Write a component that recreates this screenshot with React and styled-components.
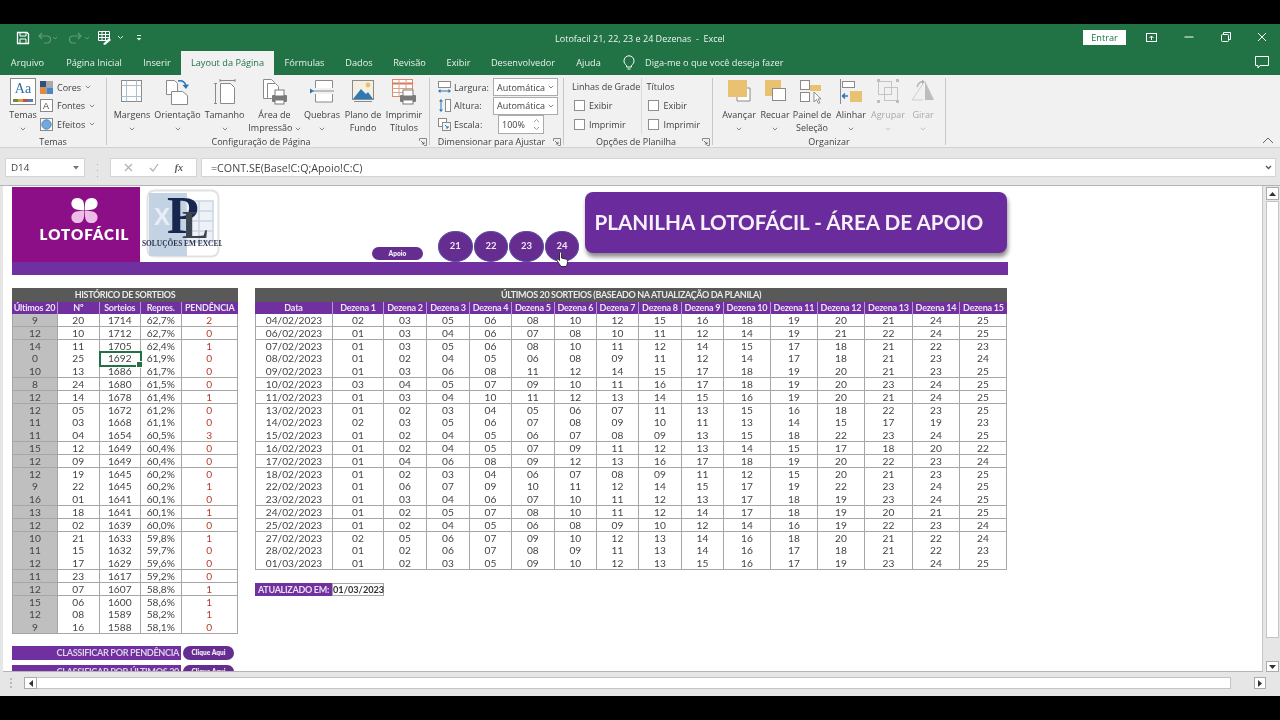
import React from "react";
import styled, { createGlobalStyle } from "styled-components";

const GlobalStyle = createGlobalStyle`
  html, body { margin: 0; padding: 0; background: #000; overflow: hidden; }
  * { box-sizing: border-box; }
`;

const uiFont = `"Open Sans", "Noto Sans", "Liberation Sans", sans-serif`;
const cellFont = `Lato, "Liberation Sans", sans-serif`;
const purple = "#7030a0";

const Screen = styled.div`
  width: 1280px;
  height: 720px;
  padding: 24px 0;
  background: #000;
  display: flex;
  flex-direction: column;
  font-family: ${uiFont};
  filter: blur(0.35px);
`;

/* title bar + tabs */
const TitleBar = styled.div`
  height: 26px;
  background: #217346;
  color: #eef4f0;
  display: grid;
  grid-template-columns: 1fr auto 1fr;
  align-items: center;
`;
const Qat = styled.div`
  display: flex;
  align-items: center;
  gap: 6px;
  padding-left: 15px;
  padding-top: 1px;
`;
const DocTitle = styled.div`
  font-size: 9px;
  padding-top: 3px;
  white-space: pre;
`;
const WindowControls = styled.div`
  display: flex;
  align-items: center;
  justify-content: flex-end;
`;
const SignIn = styled.div`
  width: 43px;
  height: 15px;
  background: #fff;
  color: #217346;
  font-size: 9.2px;
  line-height: 15px;
  text-align: center;
  margin-right: 7px;
`;
const WindowButton = styled.div`
  width: ${p => p.$w || 37}px;
  display: flex;
  justify-content: center;
`;
const TabBar = styled.div`
  height: 25px;
  background: #217346;
  display: flex;
  align-items: flex-end;
  color: #e8f1ec;
  font-size: 9.2px;
`;
const Tab = styled.div`
  width: ${p => p.$w}px;
  height: ${p => (p.$active ? 24 : 25)}px;
  line-height: ${p => (p.$active ? 24 : 25)}px;
  text-align: center;
  white-space: nowrap;
  background: ${p => (p.$active ? "#f1f1f1" : "transparent")};
  color: ${p => (p.$active ? "#217346" : "inherit")};
`;
const TellMe = styled.div`
  display: flex;
  align-items: center;
  height: 25px;
  gap: 10px;
  padding-left: 11px;
  flex: 1;
`;
const CommentBox = styled.div`
  margin-left: auto;
  padding-right: 11px;
  display: flex;
`;

/* ribbon */
const Ribbon = styled.div`
  height: 73px;
  background: #f1f1f1;
  border-bottom: 1px solid #d2d2d2;
  display: flex;
  padding: 3px 0 2px;
  color: #3f3f3f;
  font-size: 9px;
  position: relative;
`;
const Group = styled.div`
  width: ${p => p.$w}px;
  border-right: 1px solid #c8c8c8;
  display: flex;
  flex-direction: column;
  position: relative;
`;
const GroupBody = styled.div`
  height: 57px;
  display: flex;
  padding-left: ${p => p.$pad || 0}px;
`;
const GroupLabel = styled.div`
  height: 11px;
  line-height: 16px;
  text-align: center;
  white-space: nowrap;
  padding-right: ${p => p.$shift || 0}px;
`;
const Launcher = styled.svg`
  position: absolute;
  right: 2px;
  bottom: -1px;
`;
const BigButton = styled.div`
  width: ${p => p.$w}px;
  display: flex;
  flex-direction: column;
  align-items: center;
  color: ${p => (p.$off ? "#a9a9a9" : "inherit")};
`;
const BigIcon = styled.div`
  height: 30px;
  display: flex;
  align-items: flex-start;
  justify-content: center;
`;
const BigLabel = styled.div`
  line-height: 13px;
  text-align: center;
  white-space: nowrap;
`;
const ThemeTile = styled.div`
  width: 26px;
  height: 27px;
  border: 1px solid #8a8a8a;
  background: #fff;
  color: #2e6ea6;
  font: 14px/20px "Liberation Serif", serif;
  text-align: center;
  position: relative;
  &::after {
    content: "";
    position: absolute;
    left: 2px;
    right: 2px;
    bottom: 2px;
    height: 3px;
    background: linear-gradient(90deg, #6b8e3e 25%, #d8a13a 25% 50%, #c0504d 50% 75%, #4f81bd 75%);
  }
`;
const SmallStack = styled.div`
  display: flex;
  flex-direction: column;
`;
const SmallRow = styled.div`
  height: 18.5px;
  display: flex;
  align-items: center;
  gap: ${p => p.$gap || 3}px;
  white-space: nowrap;
`;
const FieldLabel = styled.span`
  width: ${p => p.$w}px;
  flex: none;
`;
const DropField = styled.div`
  width: 65px;
  height: 18px;
  margin-top: -1px;
  margin-bottom: -1px;
  background: #fff;
  border: 1px solid #ababab;
  padding: 0 3px;
  line-height: 15px;
  display: flex;
  align-items: center;
  justify-content: space-between;
`;
const SpinField = styled.div`
  width: 46px;
  height: 19px;
  margin-left: 5px;
  background: #fff;
  border: 1px solid #ababab;
  padding: 0 3px;
  display: flex;
  align-items: center;
  justify-content: space-between;
`;
const OptionColumn = styled.div`
  width: ${p => p.$w}px;
  display: flex;
  flex-direction: column;
  padding-left: ${p => p.$pad}px;
  border-right: ${p => (p.$divided ? "1px solid #dadada" : "none")};
  height: 55.5px;
`;
const OptionTitle = styled.div`
  height: 18.5px;
  line-height: 18.5px;
  white-space: nowrap;
`;
const CheckRow = styled.div`
  height: 18.5px;
  display: flex;
  align-items: center;
  gap: 4px;
  padding-left: 2px;
`;
const CheckBox = styled.span`
  width: 11px;
  height: 11px;
  background: #fff;
  border: 1px solid #8e8e8e;
  flex: none;
`;
const Collapse = styled.svg`
  position: absolute;
  right: 6px;
  bottom: 3px;
`;

/* formula bar */
const FormulaBar = styled.div`
  height: 38px;
  background: #e6e6e6;
  display: flex;
  padding: 10px 4px 8px 5px;
  border-bottom: 1px solid #b4b4b4;
  color: #444;
`;
const NameBox = styled.div`
  width: 80px;
  background: #fff;
  border: 1px solid #d4d4d4;
  font-size: 9.8px;
  display: flex;
  align-items: center;
  justify-content: space-between;
  padding: 0 5px;
`;
const Grip = styled.div`
  width: 25px;
  text-align: center;
  color: #aaa;
  font-size: 9px;
  line-height: 6px;
  padding-top: 4px;
  white-space: pre;
`;
const FormulaTools = styled.div`
  width: 87px;
  background: #fff;
  border: 1px solid #d4d4d4;
  margin-right: 4px;
  display: flex;
  align-items: center;
  justify-content: space-around;
  padding: 0 5px;
  color: #b0b0b0;
`;
const FxMark = styled.span`
  font: italic bold 10px "Liberation Serif", serif;
  color: #5c5c5c;
`;
const FormulaInput = styled.div`
  flex: 1;
  background: #fff;
  border: 1px solid #d4d4d4;
  font-size: 10.7px;
  display: flex;
  align-items: center;
  justify-content: space-between;
  padding: 0 3px 0 9px;
`;

/* worksheet */
const Middle = styled.div`
  height: 486px;
  display: flex;
  background: #e6e6e6;
`;
const Sheet = styled.div`
  flex: 1;
  margin-left: 3px;
  background: #fff;
  overflow: hidden;
  padding: 1px 0 0 9px;
  border-bottom: 1px solid #b4b4b4;
  border-right: 1px solid #c6c6c6;
`;
const Banner = styled.div`
  height: 75px;
  display: flex;
  width: 996px;
`;
const LogoBlock = styled.div`
  width: 128px;
  background: #8c0f87;
  display: flex;
  flex-direction: column;
  align-items: center;
  color: #fff;
  padding: 10px 0 0 17px;
  font: 800 15px/20px Lato, sans-serif;
  letter-spacing: 1px;
`;
const BrandMark = styled.div`
  width: 80px;
  margin-left: 2px;
  margin-top: 2px;
`;
const SmallPill = styled.div`
  width: 51px;
  height: 13px;
  margin: 60px 0 0 150px;
  border-radius: 7px;
  background: #662d91;
  color: #f0e8f5;
  font: 800 6.6px/13px Lato, sans-serif;
  text-align: center;
`;
const Circles = styled.div`
  display: flex;
  gap: 1px;
  margin: 44px 0 0 15px;
`;
const Circle = styled.div`
  width: 34.6px;
  height: 30.5px;
  border-radius: 50%;
  background: #662d91;
  border: 1px solid #5a4fa0;
  color: #f0e8f5;
  font: 700 9.5px/28px Lato, sans-serif;
  text-align: center;
  position: relative;
`;
const Cursor = styled.svg`
  position: absolute;
  left: 10px;
  top: 19px;
  z-index: 2;
`;
const TitleCard = styled.div`
  width: 422px;
  height: 61px;
  margin: 5px 0 0 6px;
  border-radius: 8px;
  background: #6a2c9c;
  box-shadow: 1px 4px 4px rgba(0, 0, 0, 0.45);
  color: #f6f0fa;
  font: 700 20.7px/61px Lato, sans-serif;
  padding-left: 9px;
  white-space: nowrap;
`;
const Band = styled.div`
  width: 996px;
  height: 13px;
  background: ${purple};
`;
const Boards = styled.div`
  display: flex;
  gap: 17px;
  margin-top: 13px;
  width: 996px;
  font-family: ${cellFont};
`;
const LeftColumn = styled.div`
  width: 226px;
  flex: none;
`;
const RightColumn = styled.div`
  width: 752px;
  flex: none;
`;
const BoardTitle = styled.div`
  height: 13.5px;
  background: #595959;
  color: #e9e9e9;
  font-weight: 700;
  font-size: 9px;
  letter-spacing: -0.36px;
  line-height: 14px;
  text-align: center;
  white-space: nowrap;
`;
const Row = styled.div`
  display: grid;
  grid-template-columns: ${p => p.$cols};
  height: ${p => (p.$head ? 12.5 : 12.8)}px;
`;
const HeadCell = styled.div`
  background: ${purple};
  color: #ebe3f2;
  font-weight: 700;
  font-size: 9px;
  letter-spacing: -0.22px;
  line-height: 12.5px;
  text-align: center;
  border-right: 1px solid #b79ad0;
  white-space: nowrap;
  overflow: hidden;
  &:last-child { border-right: none; }
`;
const Cell = styled.div`
  background: ${p => (p.$gray ? "#bfbfbf" : "#fff")};
  color: ${p => (p.$red ? "#c0392b" : "#444")};
  font-size: 10.2px;
  line-height: 12.2px;
  text-align: center;
  border-right: 1px solid #a6a6a6;
  border-bottom: 1px solid #a6a6a6;
  &:first-child { border-left: 1px solid #a6a6a6; }
  position: relative;
  ${p => p.$selected && `
    outline: 2px solid #217346;
    outline-offset: -1px;
    z-index: 1;
    &::after {
      content: "";
      position: absolute;
      right: -3px;
      bottom: -3px;
      width: 5px;
      height: 5px;
      background: #217346;
      border: 1px solid #fff;
    }
  `}
`;
const UpdateLine = styled.div`
  display: flex;
  margin-top: 13px;
  height: 13px;
`;
const UpdateLabel = styled.div`
  width: 77px;
  background: ${purple};
  color: #e8dff0;
  font-weight: 700;
  font-size: 9px;
  letter-spacing: -0.3px;
  line-height: 13px;
  text-align: center;
  white-space: nowrap;
`;
const UpdateValue = styled.div`
  width: 52px;
  border: 1px solid #a6a6a6;
  color: #333;
  font-weight: 700;
  font-size: 9.2px;
  line-height: 11.5px;
  text-align: center;
`;
const SortRow = styled.div`
  display: flex;
  gap: 2px;
  height: 13.5px;
  margin-top: ${p => p.$top}px;
`;
const SortBar = styled.div`
  width: 169px;
  background: ${purple};
  color: #dccfe8;
  font-weight: 700;
  font-size: 9.2px;
  letter-spacing: -0.4px;
  line-height: 13.5px;
  text-align: right;
  padding-right: 2px;
  white-space: nowrap;
`;
const SortPill = styled.div`
  width: 51px;
  border-radius: 7px;
  background: #662d91;
  color: #f0e8f5;
  font-weight: 800;
  font-size: 6.6px;
  line-height: 13.5px;
  text-align: center;
`;

/* scrollbars */
const VBar = styled.div`
  width: 17px;
  display: flex;
  flex-direction: column;
  padding: 1px 1px 0 3px;
  gap: 1px;
`;
const ScrollButton = styled.div`
  width: ${p => p.$w || 13}px;
  height: ${p => p.$h || 12}px;
  background: #fff;
  border: 1px solid #ababab;
  display: flex;
  align-items: center;
  justify-content: center;
  flex: none;
`;
const VThumb = styled.div`
  height: 437px;
  background: #fff;
  border: 1px solid #c4c4c4;
  margin-bottom: auto;
  flex: none;
`;
const HBar = styled.div`
  height: 24px;
  background: #e6e6e6;
  display: flex;
  align-items: flex-start;
  padding: 5px 0 0 24px;
  position: relative;
`;
const HGrip = styled.div`
  position: absolute;
  left: 10px;
  top: 6px;
  width: 2px;
  height: 10px;
  background: repeating-linear-gradient(#bbb 0 2px, transparent 2px 4px);
`;
const HThumb = styled.div`
  width: 1194px;
  height: 12px;
  background: #fff;
  border: 1px solid #c4c4c4;
  border-left: none;
  margin-right: 23px;
`;

const Chev = ({ color = "#777" }) => (
  <svg width="6" height="4" viewBox="0 0 6 4"><path d="M.8.8 3 3l2.2-2.2" fill="none" stroke={color} strokeWidth=".9" /></svg>
);

const Launch = () => (
  <Launcher width="8" height="8" viewBox="0 0 8 8">
    <path d="M.5 3V.5H7.5V7.5H5" fill="none" stroke="#8a8a8a" />
    <path d="M2 3l3 3M5 3.8V6H2.8" fill="none" stroke="#555" strokeWidth=".8" />
  </Launcher>
);

const icons = {
  margens: (
    <svg width="24" height="26" viewBox="0 0 24 26">
      <rect x="1.5" y="2.5" width="20" height="21" fill="#fdfdfd" stroke="#8a8a8a" />
      <path d="M6.5 2.5v21M16.5 2.5v21M1.5 7.5h20M1.5 18.5h20" stroke="#a9c0ce" fill="none" />
    </svg>
  ),
  orientacao: (
    <svg width="26" height="28" viewBox="0 0 26 28">
      <path d="M1.5 2.5h8l3 3v11h-11z" fill="#fff" stroke="#8a8a8a" />
      <path d="M6.5 13.5h11l5 4v9h-16z" fill="#fff" stroke="#8a8a8a" />
      <path d="M13 3c5-1 7 1 8 5" fill="none" stroke="#2b74b8" strokeWidth="1.5" />
      <path d="M17.5 7l3.5 4 3-4.5z" fill="#2b74b8" />
    </svg>
  ),
  tamanho: (
    <svg width="24" height="28" viewBox="0 0 24 28">
      <path d="M7.5 5.5h10l4 4v16h-14z" fill="#fff" stroke="#8a8a8a" />
      <path d="M2.5 5v21M1 5.5h3M1 25.5h3M7 2.5h15M7 1v3M22 1v3" stroke="#8a8a8a" fill="none" />
    </svg>
  ),
  area: (
    <svg width="26" height="28" viewBox="0 0 26 28">
      <path d="M1.5 1.5h8l3 3v16h-11z" fill="#fff" stroke="#8a8a8a" />
      <path d="M5.5 5.5h8l3 3v12h-11z" fill="#fff" stroke="#8a8a8a" />
      <rect x="10" y="17" width="15" height="7" rx="1" fill="#7a7a7a" />
      <rect x="13" y="12" width="9" height="6" fill="#fff" stroke="#7a7a7a" />
      <rect x="13" y="22" width="9" height="4" fill="#fff" stroke="#7a7a7a" />
    </svg>
  ),
  quebras: (
    <svg width="26" height="26" viewBox="0 0 26 26">
      <path d="M6.5 10V2.500h17V10M6.5 16v8h17v-8" fill="#fff" stroke="#8a8a8a" />
      <path d="M4 13h21" stroke="#8a8a8a" />
      <path d="M1 10.500l4 2.500-4 2.500z" fill="#2b74b8" />
    </svg>
  ),
  plano: (
    <svg width="24" height="26" viewBox="0 0 24 26">
      <rect x="1.5" y="2.5" width="21" height="19" fill="#f4efe2" stroke="#8a8a8a" />
      <circle cx="17" cy="7" r="2.4" fill="#e8c06c" />
      <path d="M2 21l8-10 5 5 2-2 5 7z" fill="#2f79b5" />
      <path d="M3 23.5h18" stroke="#8a8a8a" />
    </svg>
  ),
  imprimir: (
    <svg width="26" height="27" viewBox="0 0 26 27">
      <rect x="1.5" y="1.5" width="20" height="17" fill="#fff" stroke="#d88a6a" />
      <path d="M1.5 5.5h20" stroke="#d8785a" strokeWidth="2" />
      <path d="M1.5 10.5h20M1.5 14.5h20M8 1.5v17M15 1.5v17" stroke="#d9a08a" />
      <rect x="9" y="17" width="16" height="7" rx="1" fill="#7a7a7a" />
      <rect x="12" y="12" width="10" height="6" fill="#fff" stroke="#7a7a7a" />
      <rect x="12" y="22" width="10" height="4" fill="#fff" stroke="#7a7a7a" />
    </svg>
  ),
  avancar: (
    <svg width="24" height="26" viewBox="0 0 24 26">
      <path d="M10 10h13v13H10z" fill="#fff" stroke="#8a8a8a" />
      <rect x="1" y="2" width="19" height="17" fill="#e8c271" />
    </svg>
  ),
  recuar: (
    <svg width="24" height="26" viewBox="0 0 24 26">
      <rect x="2" y="2" width="16" height="16" fill="#e8c271" />
      <rect x="9.5" y="10.5" width="13" height="12" fill="#fff" stroke="#8a8a8a" />
    </svg>
  ),
  painel: (
    <svg width="26" height="27" viewBox="0 0 26 27">
      <rect x="1.5" y="2.5" width="9" height="9" fill="#fff" stroke="#8a8a8a" />
      <rect x="1.5" y="14.5" width="9" height="9" fill="#fff" stroke="#8a8a8a" />
      <rect x="11" y="7" width="11" height="6" fill="#e8c271" />
      <path d="M15 14v10l2.5-2.5 2 4 1.5-.8-2-3.8H22z" fill="#fff" stroke="#777" strokeWidth=".8" />
    </svg>
  ),
  alinhar: (
    <svg width="24" height="27" viewBox="0 0 24 27">
      <path d="M1.5 1v25" stroke="#8a8a8a" />
      <rect x="3.5" y="3.5" width="12" height="6" fill="#fff" stroke="#8a8a8a" />
      <rect x="11" y="13" width="12" height="11" fill="#e8c271" />
      <path d="M9 18H4M6 15.5L3.5 18 6 20.5" fill="none" stroke="#2b74b8" strokeWidth="1.5" />
    </svg>
  ),
  agrupar: (
    <svg width="24" height="26" viewBox="0 0 24 26">
      <rect x="2.5" y="3.5" width="13" height="13" fill="none" stroke="#c4c4c4" />
      <rect x="8.5" y="9.5" width="13" height="13" fill="none" stroke="#c4c4c4" />
      <path d="M1 1h3v3H1zM20 1h3v3h-3zM1 22h3v3H1zM20 22h3v3h-3z" fill="#bdbdbd" />
    </svg>
  ),
  girar: (
    <svg width="26" height="26" viewBox="0 0 26 26">
      <path d="M15 3l9 19H15z" fill="#bdbdbd" />
      <path d="M13 6L2 22h11" fill="none" stroke="#cfcfcf" />
      <path d="M7 9c1-4 4-6 7-5" fill="none" stroke="#b0b0b0" strokeWidth="1.3" />
      <path d="M12 1.5l3 2.5-3 2.2z" fill="#b0b0b0" />
    </svg>
  ),
  cores: (
    <svg width="13" height="13" viewBox="0 0 13 13">
      <rect width="6.5" height="6.5" fill="#30507a" />
      <rect x="6.5" width="6.5" height="6.5" fill="#a9a9a9" />
      <rect y="6.5" width="6.5" height="6.5" fill="#e08a3c" />
      <rect x="6.5" y="6.5" width="6.5" height="6.5" fill="#4a86c5" />
    </svg>
  ),
  efeitos: (
    <svg width="13" height="13" viewBox="0 0 13 13">
      <rect x=".5" y=".5" width="12" height="12" fill="#fff" stroke="#8a8a8a" />
      <circle cx="6.5" cy="6.5" r="4.7" fill="#72a8dc" stroke="#4a86c5" />
    </svg>
  ),
  largura: (
    <svg width="13" height="13" viewBox="0 0 13 13">
      <rect x=".5" y=".5" width="12" height="6" fill="#fff" stroke="#8a8a8a" />
      <path d="M1 10h11" stroke="#2b74b8" />
      <path d="M0 10l2.5-2v4zM13 10l-2.5-2v4z" fill="#2b74b8" />
    </svg>
  ),
  altura: (
    <svg width="13" height="13" viewBox="0 0 13 13">
      <rect x="7.5" y=".5" width="5" height="12" fill="#fff" stroke="#8a8a8a" />
      <path d="M3 1v11" stroke="#2b74b8" />
      <path d="M3 0l2 2.5H1zM3 13l2-2.5H1z" fill="#2b74b8" />
    </svg>
  ),
  escala: (
    <svg width="13" height="13" viewBox="0 0 13 13">
      <rect x=".5" y=".5" width="8" height="8" fill="#fff" stroke="#8a8a8a" />
      <rect x="4.5" y="4.5" width="8" height="8" fill="#f5f5f5" stroke="#8a8a8a" />
      <path d="M7 7l3 3M10 8v2H8" fill="none" stroke="#2b74b8" />
    </svg>
  ),
};

const pageButtons = [
  { w: 44, icon: "margens", lines: ["Margens"], chev: true },
  { w: 47, icon: "orientacao", lines: ["Orientação"], chev: true },
  { w: 47, icon: "tamanho", lines: ["Tamanho"], chev: true },
  { w: 53, icon: "area", lines: ["Área de", "Impressão"], inlineChev: true },
  { w: 42, icon: "quebras", lines: ["Quebras"], chev: true },
  { w: 40, icon: "plano", lines: ["Plano de", "Fundo"] },
  { w: 42, icon: "imprimir", lines: ["Imprimir", "Títulos"] },
];
const arrangeButtons = [
  { w: 36, icon: "avancar", lines: ["Avançar"], chev: true },
  { w: 36, icon: "recuar", lines: ["Recuar"], chev: true },
  { w: 38, icon: "painel", lines: ["Painel de", "Seleção"] },
  { w: 40, icon: "alinhar", lines: ["Alinhar"], chev: true },
  { w: 34, icon: "agrupar", lines: ["Agrupar"], chev: true, off: true },
  { w: 36, icon: "girar", lines: ["Girar"], chev: true, off: true },
];

const RibbonButton = ({ w, icon, lines, chev, inlineChev, off }) => (
  <BigButton $w={w} $off={off}>
    <BigIcon>{icons[icon]}</BigIcon>
    {lines.map((line, i) => (
      <BigLabel key={line}>
        {line}
        {inlineChev && i === 1 && <> <Chev /></>}
      </BigLabel>
    ))}
    {chev && <BigLabel><Chev color={off ? "#bbb" : "#777"} /></BigLabel>}
  </BigButton>
);

const tabs = [
  ["Arquivo", 55], ["Página Inicial", 78], ["Inserir", 48], ["Layout da Página", 93, true],
  ["Fórmulas", 61], ["Dados", 48], ["Revisão", 53], ["Exibir", 45], ["Desenvolvedor", 84], ["Ajuda", 47],
];

const LEFT_COLS = "46px 41.5px 41.5px 40.5px 56.5px";
const RIGHT_COLS = "78px 51px 43px 43px 42px 42.7px 42.3px 42px 43px 42px 47px 47px 47px 48px 47px 47px";

const history = `9 20 1714 62,7% 2
12 10 1712 62,7% 0
14 11 1705 62,4% 1
0 25 1692 61,9% 0
10 13 1686 61,7% 0
8 24 1680 61,5% 0
12 14 1678 61,4% 1
12 05 1672 61,2% 0
11 03 1668 61,1% 0
11 04 1654 60,5% 3
15 12 1649 60,4% 0
12 09 1649 60,4% 0
12 19 1645 60,2% 0
9 22 1645 60,2% 1
16 01 1641 60,1% 0
13 18 1641 60,1% 1
12 02 1639 60,0% 0
10 21 1633 59,8% 1
11 15 1632 59,7% 0
12 17 1629 59,6% 0
11 23 1617 59,2% 0
12 07 1607 58,8% 1
15 06 1600 58,6% 1
12 08 1589 58,2% 1
9 16 1588 58,1% 0`.split("\n").map(l => l.split(" "));

const draws = `04/02/2023 02 03 05 06 08 10 12 15 16 18 19 20 21 24 25
06/02/2023 01 03 04 06 07 08 10 11 12 14 19 21 22 24 25
07/02/2023 01 03 05 06 08 10 11 12 14 15 17 18 21 22 23
08/02/2023 01 02 04 05 06 08 09 11 12 14 17 18 21 23 24
09/02/2023 01 03 06 08 11 12 14 15 17 18 19 20 21 23 25
10/02/2023 03 04 05 07 09 10 11 16 17 18 19 20 23 24 25
11/02/2023 01 03 04 10 11 12 13 14 15 16 19 20 21 24 25
13/02/2023 01 02 03 04 05 06 07 11 13 15 16 18 22 23 25
14/02/2023 02 03 05 06 07 08 09 10 11 13 14 15 17 19 23
15/02/2023 01 02 04 05 06 07 08 09 13 15 18 22 23 24 25
16/02/2023 01 02 04 05 07 09 11 12 13 14 15 17 18 20 22
17/02/2023 01 04 06 08 09 12 13 16 17 18 19 20 22 23 24
18/02/2023 01 02 03 04 06 07 08 09 11 12 15 20 21 23 25
22/02/2023 01 06 07 09 10 11 12 14 15 17 19 22 23 24 25
23/02/2023 01 03 04 06 07 10 11 12 13 17 18 19 23 24 25
24/02/2023 01 02 05 07 08 10 11 12 14 17 18 19 20 21 25
25/02/2023 01 02 04 05 06 08 09 10 12 14 16 19 22 23 24
27/02/2023 02 05 06 07 09 10 12 13 14 16 18 20 21 22 24
28/02/2023 01 02 06 07 08 09 11 13 14 16 17 18 21 22 23
01/03/2023 01 02 03 05 09 10 12 13 15 16 17 19 23 24 25`.split("\n").map(l => l.split(" "));

const dezenas = Array.from({ length: 15 }, (_, i) => `Dezena ${i + 1}`);

const petal = "M13.2 13.2C13.2 9 13.2 6 12 3.800 10.500 1 6 0 3 1.800 0 3.800 0 7 1 9.200 2.500 12.500 7 13.200 13.200 13.200z";

const Clover = () => (
  <svg width="27" height="27" viewBox="0 0 27 27">
    <path d={petal} fill="#fff" />
    <path d={petal} fill="#fff" transform="matrix(-1 0 0 1 27 0)" />
    <path d={petal} fill="#eebde6" transform="matrix(1 0 0 -1 0 27)" />
    <path d={petal} fill="#eebde6" transform="matrix(-1 0 0 -1 27 27)" />
  </svg>
);

const BrandLogo = () => (
  <svg width="80" height="70" viewBox="0 0 80 70">
    <rect x="5.500" y="1.500" width="71" height="66" rx="7" fill="#fff" stroke="#e2e2e2" strokeWidth="2" />
    <rect x="7" y="4" width="38" height="63" fill="#c3d3e4" />
    <text x="12" y="36" fontFamily="Liberation Sans" fontWeight="700" fontSize="24" fill="#e8eef5">X</text>
    <path d="M44 12h27v41H44zM44 22h27M44 32h27M44 42h27M57 12v41" fill="#eef2f6" stroke="#c9d6e3" strokeWidth="1.500" />
    <text x="25" y="44" fontFamily="Liberation Serif" fontWeight="700" fontSize="52" fill="#17264f">P</text>
    <text x="40" y="49" fontFamily="Liberation Serif" fontWeight="700" fontSize="40" fill="#3d4550">L</text>
    <text x="0" y="56.500" fontFamily="Liberation Serif" fontWeight="700" fontSize="7.400" fill="#2d3550">SOLUÇÕES EM EXCEL</text>
  </svg>
);

const App = () => (
  <Screen>
    <GlobalStyle />
    <TitleBar>
      <Qat>
        <svg width="16" height="16" viewBox="0 0 16 16">
          <path d="M2.500 2.500h9.500l1.500 1.500v9.500h-11z" fill="none" stroke="#fff" strokeWidth="1.300" />
          <path d="M5 2.500h6v3.500H5zM5 13.500V9h6v4.500" fill="none" stroke="#fff" />
        </svg>
        <svg width="24" height="14" viewBox="0 0 24 14">
          <path d="M5 2L2 5l3 3M2.500 5H10a3 3 0 0 1 0 7H7" fill="none" stroke="#5f9a7c" strokeWidth="1.200" />
          <path d="M16 6l2 2 2-2" fill="none" stroke="#5f9a7c" />
        </svg>
        <svg width="24" height="14" viewBox="0 0 24 14">
          <path d="M11 2l3 3-3 3M13.500 5H6a3 3 0 0 0 0 7h3" fill="none" stroke="#5f9a7c" strokeWidth="1.200" />
          <path d="M18 6l2 2 2-2" fill="none" stroke="#5f9a7c" />
        </svg>
        <svg width="30" height="15" viewBox="0 0 30 15">
          <path d="M1.500 1.500h11v9h-11zM1.500 4.500h11M1.500 7.500h11M5 1.500v9M8.500 1.500v9" fill="none" stroke="#fff" />
          <path d="M6 14l6-6 2 2-6 5z" fill="#fff" />
          <path d="M21 6l2.500 2.500L26 6" fill="none" stroke="#dfeae4" />
        </svg>
        <svg width="12" height="12" viewBox="0 0 12 12">
          <path d="M4 3h4v1H4zM3.500 6h5L6 8.500z" fill="#dfeae4" />
        </svg>
      </Qat>
      <DocTitle>{"Lotofacil 21, 22, 23 e 24 Dezenas  -  Excel"}</DocTitle>
      <WindowControls>
        <SignIn>Entrar</SignIn>
        <WindowButton>
          <svg width="11" height="9" viewBox="0 0 11 9">
            <rect x=".5" y=".5" width="10" height="8" fill="none" stroke="#fff" />
            <path d="M5.500 7V3M3.500 5l2-2 2 2" fill="none" stroke="#fff" />
          </svg>
        </WindowButton>
        <WindowButton>
          <svg width="10" height="10" viewBox="0 0 10 10"><path d="M.5 5h9" stroke="#fff" /></svg>
        </WindowButton>
        <WindowButton>
          <svg width="10" height="10" viewBox="0 0 10 10">
            <rect x=".5" y="2.500" width="7" height="7" rx="1" fill="none" stroke="#fff" />
            <path d="M2.500 2V.5h7v7H8" fill="none" stroke="#fff" />
          </svg>
        </WindowButton>
        <WindowButton $w={36}>
          <svg width="10" height="10" viewBox="0 0 10 10"><path d="M1 1l8 8M9 1L1 9" stroke="#fff" /></svg>
        </WindowButton>
      </WindowControls>
    </TitleBar>

    <TabBar>
      {tabs.map(([name, w, active]) => (
        <Tab key={name} $w={w} $active={active}>{name}</Tab>
      ))}
      <TellMe>
        <svg width="12" height="15" viewBox="0 0 12 15">
          <path d="M3.500 10.500C2 9 1 7.800 1 5.800a5 5 0 0 1 10 0c0 2-1 3.200-2.500 4.700V12h-5zM4.500 14h3" fill="none" stroke="#fff" />
        </svg>
        Diga-me o que você deseja fazer
        <CommentBox>
          <svg width="14" height="13" viewBox="0 0 14 13">
            <path d="M.5.500h13v9H5l-2 2.500V9.500H.5z" fill="none" stroke="#fff" />
          </svg>
        </CommentBox>
      </TellMe>
    </TabBar>

    <Ribbon>
      <Group $w={107}>
        <GroupBody $pad={6}>
          <BigButton $w={34}>
            <BigIcon><ThemeTile>Aa</ThemeTile></BigIcon>
            <BigLabel>Temas</BigLabel>
            <BigLabel><Chev /></BigLabel>
          </BigButton>
          <SmallStack>
            <SmallRow $gap={4}>{icons.cores} Cores <Chev /></SmallRow>
            <SmallRow $gap={4}>
              <svg width="13" height="13" viewBox="0 0 13 13">
                <rect x=".5" y=".5" width="12" height="12" fill="#fff" stroke="#8a8a8a" />
                <text x="3" y="10" fontSize="9" fill="#444" fontFamily="Liberation Sans">A</text>
              </svg>
              Fontes <Chev />
            </SmallRow>
            <SmallRow $gap={4}>{icons.efeitos} Efeitos <Chev /></SmallRow>
          </SmallStack>
        </GroupBody>
        <GroupLabel>Temas</GroupLabel>
      </Group>

      <Group $w={323}>
        <GroupBody $pad={3}>
          {pageButtons.map(b => <RibbonButton key={b.icon} {...b} />)}
        </GroupBody>
        <GroupLabel $shift={14}>Configuração de Página</GroupLabel>
        <Launch />
      </Group>

      <Group $w={134}>
        <GroupBody $pad={8}>
          <SmallStack>
            <SmallRow>{icons.largura}<FieldLabel $w={36}>Largura:</FieldLabel><DropField>Automática <Chev /></DropField></SmallRow>
            <SmallRow>{icons.altura}<FieldLabel $w={36}>Altura:</FieldLabel><DropField>Automática <Chev /></DropField></SmallRow>
            <SmallRow>
              {icons.escala}<FieldLabel $w={36}>Escala:</FieldLabel>
              <SpinField>
                100%
                <svg width="7" height="13" viewBox="0 0 7 13"><path d="M1 4l2.500-2.500L6 4M1 9l2.500 2.500L6 9" fill="none" stroke="#888" strokeWidth=".8" /></svg>
              </SpinField>
            </SmallRow>
          </SmallStack>
        </GroupBody>
        <GroupLabel $shift={10}>Dimensionar para Ajustar</GroupLabel>
        <Launch />
      </Group>

      <Group $w={149}>
        <GroupBody>
          <OptionColumn $w={79} $pad={8} $divided>
            <OptionTitle>Linhas de Grade</OptionTitle>
            <CheckRow><CheckBox />Exibir</CheckRow>
            <CheckRow><CheckBox />Imprimir</CheckRow>
          </OptionColumn>
          <OptionColumn $w={70} $pad={4}>
            <OptionTitle>Títulos</OptionTitle>
            <CheckRow><CheckBox />Exibir</CheckRow>
            <CheckRow><CheckBox />Imprimir</CheckRow>
          </OptionColumn>
        </GroupBody>
        <GroupLabel $shift={4}>Opções de Planilha</GroupLabel>
        <Launch />
      </Group>

      <Group $w={233}>
        <GroupBody $pad={8}>
          {arrangeButtons.map(b => <RibbonButton key={b.icon} {...b} />)}
        </GroupBody>
        <GroupLabel>Organizar</GroupLabel>
      </Group>

      <Collapse width="12" height="7" viewBox="0 0 12 7">
        <path d="M1 6l5-5 5 5" fill="none" stroke="#666" />
      </Collapse>
    </Ribbon>

    <FormulaBar>
      <NameBox>D14 <svg width="6" height="4" viewBox="0 0 6 4"><path d="M0 0h6L3 3.500z" fill="#777" /></svg></NameBox>
      <Grip>{"·\n·\n·"}</Grip>
      <FormulaTools>
        <svg width="9" height="9" viewBox="0 0 9 9"><path d="M1 1l7 7M8 1L1 8" stroke="currentColor" strokeWidth="1.200" /></svg>
        <svg width="10" height="9" viewBox="0 0 10 9"><path d="M1 5l3 3 5-7" fill="none" stroke="currentColor" strokeWidth="1.200" /></svg>
        <FxMark>fx</FxMark>
      </FormulaTools>
      <FormulaInput>
        =CONT.SE(Base!C:Q;Apoio!C:C)
        <svg width="7" height="5" viewBox="0 0 7 5"><path d="M1 1l2.500 2.500L6 1" fill="none" stroke="#555" strokeWidth="1.300" /></svg>
      </FormulaInput>
    </FormulaBar>

    <Middle>
      <Sheet>
        <Banner>
          <LogoBlock>
            <Clover />
            <span>LOTOFÁCIL</span>
          </LogoBlock>
          <BrandMark><BrandLogo /></BrandMark>
          <SmallPill>Apoio</SmallPill>
          <Circles>
            <Circle>21</Circle>
            <Circle>22</Circle>
            <Circle>23</Circle>
            <Circle>
              24
              <Cursor width="13" height="17" viewBox="0 0 13 17">
                <path d="M3.500 1.500c1-1 2-.5 2 .8V7l4 1c1.500.4 2 1 2 2.500 0 2-.5 3.500-1.500 5H5L1 9.500c-.5-1 .8-2 1.800-1L3.500 9.500z" fill="#fff" stroke="#222" strokeWidth=".9" />
              </Cursor>
            </Circle>
          </Circles>
          <TitleCard>PLANILHA LOTOFÁCIL - ÁREA DE APOIO</TitleCard>
        </Banner>
        <Band />
        <Boards>
          <LeftColumn>
            <BoardTitle>HISTÓRICO DE SORTEIOS</BoardTitle>
            <Row $head $cols={LEFT_COLS}>
              {["Últimos 20", "Nº", "Sorteios", "Repres.", "PENDÊNCIA"].map(h => <HeadCell key={h}>{h}</HeadCell>)}
            </Row>
            {history.map(([last, n, total, pct, pend]) => (
              <Row key={n} $cols={LEFT_COLS}>
                <Cell $gray>{last}</Cell>
                <Cell>{n}</Cell>
                <Cell $selected={n === "25"}>{total}</Cell>
                <Cell>{pct}</Cell>
                <Cell $red>{pend}</Cell>
              </Row>
            ))}
            <SortRow $top={12.5}>
              <SortBar>CLASSIFICAR POR PENDÊNCIA</SortBar>
              <SortPill>Clique Aqui</SortPill>
            </SortRow>
            <SortRow $top={5}>
              <SortBar>CLASSIFICAR POR ÚLTIMOS 20</SortBar>
              <SortPill>Clique Aqui</SortPill>
            </SortRow>
          </LeftColumn>

          <RightColumn>
            <BoardTitle>ÚLTIMOS 20 SORTEIOS (BASEADO NA ATUALIZAÇÃO DA PLANILA)</BoardTitle>
            <Row $head $cols={RIGHT_COLS}>
              {["Data", ...dezenas].map(h => <HeadCell key={h}>{h}</HeadCell>)}
            </Row>
            {draws.map(([date, ...nums]) => (
              <Row key={date} $cols={RIGHT_COLS}>
                <Cell>{date}</Cell>
                {nums.map((num, i) => <Cell key={i}>{num}</Cell>)}
              </Row>
            ))}
            <UpdateLine>
              <UpdateLabel>ATUALIZADO EM:</UpdateLabel>
              <UpdateValue>01/03/2023</UpdateValue>
            </UpdateLine>
          </RightColumn>
        </Boards>
      </Sheet>

      <VBar>
        <ScrollButton $h={13}>
          <svg width="7" height="4" viewBox="0 0 7 4"><path d="M0 4l3.500-4L7 4z" fill="#333" /></svg>
        </ScrollButton>
        <VThumb />
        <ScrollButton $h={11}>
          <svg width="7" height="4" viewBox="0 0 7 4"><path d="M0 0l3.500 4L7 0z" fill="#333" /></svg>
        </ScrollButton>
      </VBar>
    </Middle>

    <HBar>
      <HGrip />
      <ScrollButton>
        <svg width="4" height="7" viewBox="0 0 4 7"><path d="M4 0L0 3.500 4 7z" fill="#333" /></svg>
      </ScrollButton>
      <HThumb />
      <ScrollButton $w={12}>
        <svg width="4" height="7" viewBox="0 0 4 7"><path d="M0 0l4 3.500L0 7z" fill="#333" /></svg>
      </ScrollButton>
    </HBar>
  </Screen>
);

export default App;
